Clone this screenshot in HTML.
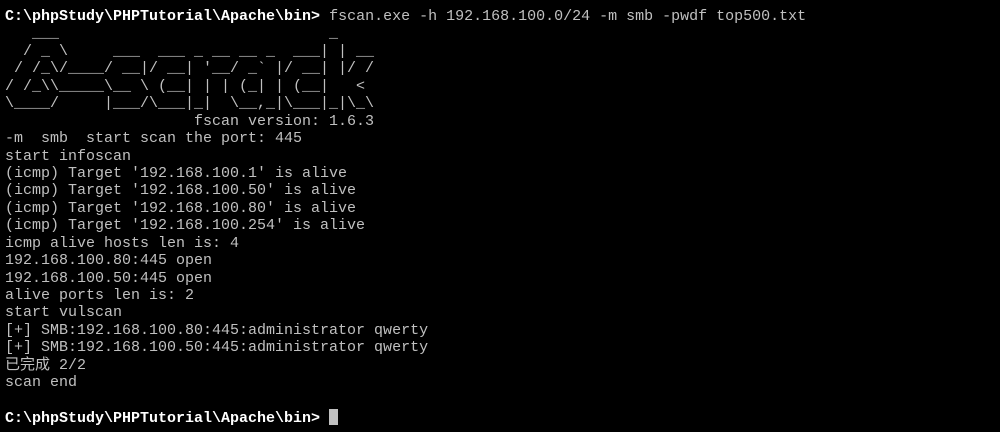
<!DOCTYPE html>
<html><head><meta charset="utf-8"><style>
html,body{margin:0;padding:0;background:#000;width:1000px;height:432px;overflow:hidden}
pre{margin:0;position:absolute;left:5px;top:8px;font-family:"Liberation Mono","Noto Sans CJK SC",monospace;font-size:15px;line-height:17.43px;color:#c0c0c0;white-space:pre}
b{color:#fff;font-weight:bold}
.cur{display:inline-block;width:9px;height:16px;background:#c0c0c0;vertical-align:-3px}
</style></head><body>
<pre><b>C:\phpStudy\PHPTutorial\Apache\bin&gt;</b> fscan.exe -h 192.168.100.0/24 -m smb -pwdf top500.txt
   ___                              _
  / _ \     ___  ___ _ __ __ _  ___| | __
 / /_\/____/ __|/ __| '__/ _` |/ __| |/ /
/ /_\\_____\__ \ (__| | | (_| | (__|   &lt;
\____/     |___/\___|_|  \__,_|\___|_|\_\
                     fscan version: 1.6.3
-m  smb  start scan the port: 445
start infoscan
(icmp) Target '192.168.100.1' is alive
(icmp) Target '192.168.100.50' is alive
(icmp) Target '192.168.100.80' is alive
(icmp) Target '192.168.100.254' is alive
icmp alive hosts len is: 4
192.168.100.80:445 open
192.168.100.50:445 open
alive ports len is: 2
start vulscan
[+] SMB:192.168.100.80:445:administrator qwerty
[+] SMB:192.168.100.50:445:administrator qwerty
已完成 2/2
scan end

<b>C:\phpStudy\PHPTutorial\Apache\bin&gt;</b> <span class="cur"></span></pre>
</body></html>
